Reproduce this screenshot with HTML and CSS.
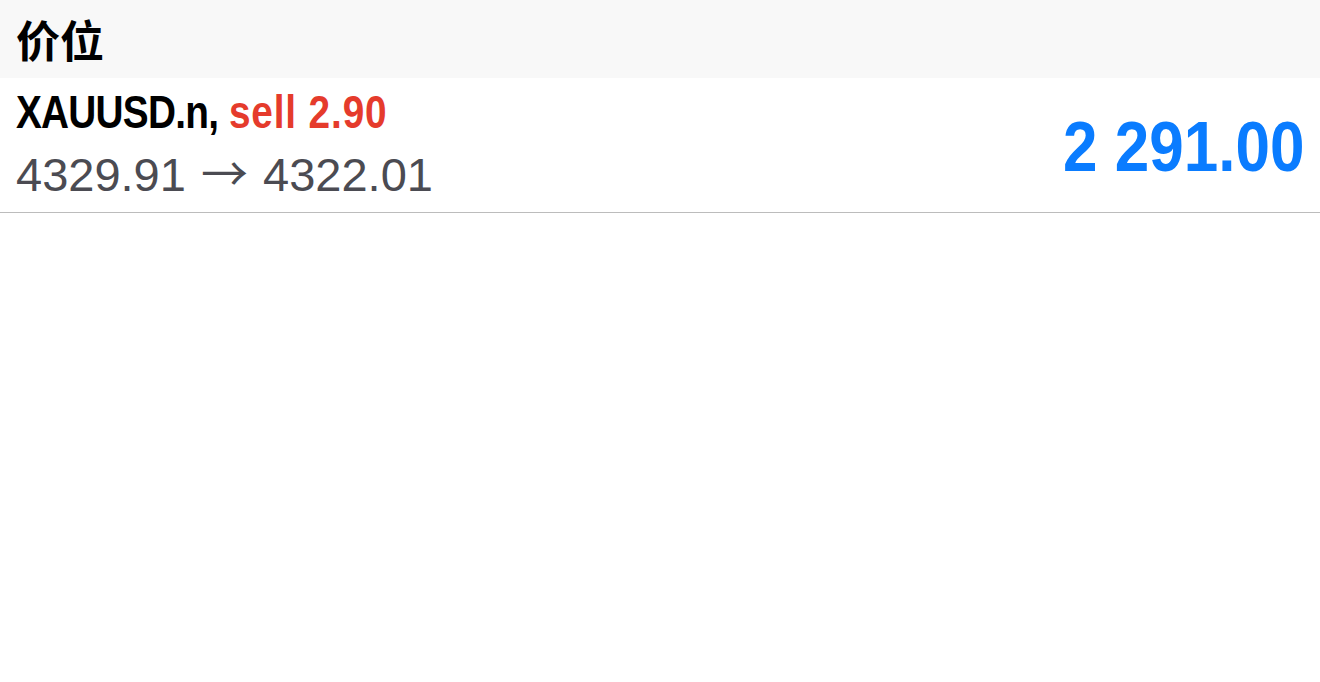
FILE: index.html
```html
<!DOCTYPE html>
<html lang="zh">
<head>
<meta charset="utf-8">
<title>价位</title>
<link rel="stylesheet" href="styles.css">
</head>
<body>
<header class="section-head"><h1 class="section-title">价位</h1></header>
<div class="quote-row">
  <div class="quote-info">
    <div class="line-1"><span class="cond"><span class="symbol">XAUUSD.n,</span> <span class="side">sell 2.90</span></span></div>
    <div class="line-2">4329.91 <span class="arrow">→</span> 4322.01</div>
  </div>
  <div class="quote-price"><span class="price">2 291.00</span></div>
</div>
</body>
</html>
```
FILE: styles.css
```css
html, body {
  margin: 0;
  padding: 0;
  background: #ffffff;
  font-family: "Liberation Sans", Arial, sans-serif;
}
.section-head {
  height: 78px;
  background: #f8f8f8;
  display: flex;
  align-items: center;
  padding: 0 16px;
  box-sizing: border-box;
}
.section-title {
  margin: 0;
  font-family: "Noto Sans CJK SC", "Liberation Sans", sans-serif;
  font-weight: 700;
  font-size: 44px;
  line-height: 1;
  color: #000;
}
.quote-row {
  display: flex;
  align-items: center;
  justify-content: space-between;
  padding: 6px 16px 9px 16px;
  border-bottom: 1px solid #bcbcbc;
}
.quote-info {
  display: flex;
  flex-direction: column;
}
.line-1 {
  font-size: 46px;
  line-height: 56px;
  font-weight: 700;
  white-space: nowrap;
}
.cond {
  display: inline-block;
  transform: scaleX(0.843);
  transform-origin: left center;
}
.symbol { color: #000; letter-spacing: -0.9px; }
.side { color: #e53b2c; letter-spacing: 1px; }
.line-2 {
  margin-top: 7px;
  font-size: 47px;
  line-height: 56px;
  color: #4b4b52;
  white-space: nowrap;
}
.arrow {
  font-family: "Noto Sans CJK SC", sans-serif;
  font-weight: 400;
  line-height: 0;
  margin: 0 2px;
}
.quote-price {
  display: flex;
  align-items: center;
  padding-top: 6px;
}
.price {
  display: inline-block;
  font-size: 70px;
  line-height: 80px;
  font-weight: 700;
  color: #0a7cff;
  transform: scaleX(0.886);
  transform-origin: right center;
  white-space: nowrap;
}
```
